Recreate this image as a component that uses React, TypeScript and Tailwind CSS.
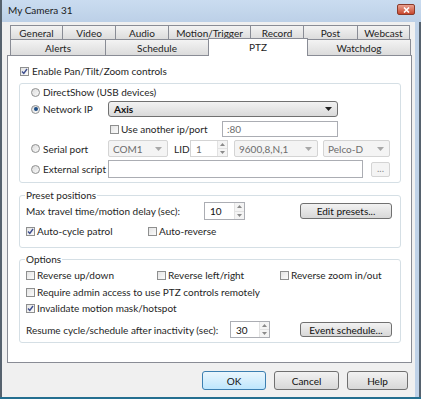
import React from "react";

function Check({ checked = false }: { checked?: boolean }) {
  return (
    <span className="flex h-[9px] w-[9px] shrink-0 items-center justify-center border border-[#8e8f8f] bg-gradient-to-br from-[#e4e4e4] to-[#fbfbfb]">
      {checked && (
        <svg width="7" height="7" viewBox="0 0 7 7">
          <path d="M1 3.6 L2.8 5.5 L6 1" fill="none" stroke="#3f4f8f" strokeWidth="1.4" />
        </svg>
      )}
    </span>
  );
}

function Radio({ checked = false }: { checked?: boolean }) {
  return (
    <span className="flex h-[9px] w-[9px] shrink-0 items-center justify-center rounded-full border border-[#8e8f8f] bg-gradient-to-br from-[#dcdcdc] to-[#fafafa]">
      {checked && <span className="h-[4px] w-[4px] rounded-full bg-[#1f4f86]" />}
    </span>
  );
}

function Arrow({ light = false }: { light?: boolean }) {
  return (
    <svg width="7" height="4" viewBox="0 0 7 4">
      <path d="M0 0 L7 0 L3.5 4 Z" fill={light ? "#a8a8a8" : "#222"} />
    </svg>
  );
}

function Combo({ w, text, disabled = false }: { w: string; text: string; disabled?: boolean }) {
  if (disabled) {
    return (
      <div className={`${w} flex h-[17px] shrink-0 items-center justify-between rounded-[2px] border border-[#d4d4d4] bg-[#f4f4f4] pl-[4px] pr-[5px] text-[#6d6d6d]`}>
        <span>{text}</span>
        <Arrow light />
      </div>
    );
  }
  return (
    <div className={`${w} flex h-[16px] shrink-0 items-center justify-between rounded-[3px] border border-[#707070] bg-gradient-to-b from-[#f2f2f2] to-[#dadada] pl-[5px] pr-[5px] text-[#111]`}>
      <span className="font-bold">{text}</span>
      <Arrow />
    </div>
  );
}

function Spin({ w, h, value, disabled = false }: { w: string; h: string; value: string; disabled?: boolean }) {
  return (
    <div className={`${w} ${h} flex shrink-0 border ${disabled ? "border-[#d4d4d4] text-[#6d6d6d]" : "border-[#abadb3] text-[#111]"} bg-white`}>
      <span className="flex flex-1 items-center pl-[5px]">{value}</span>
      <div className="flex w-[10px] flex-col border-l border-[#e2e2e2]">
        <span className="flex flex-1 items-center justify-center bg-[#f4f4f4]">
          <svg width="5" height="3" viewBox="0 0 5 3">
            <path d="M0 3 L5 3 L2.5 0 Z" fill="#8a8a8a" />
          </svg>
        </span>
        <span className="flex flex-1 items-center justify-center border-t border-[#e2e2e2] bg-[#f4f4f4]">
          <svg width="5" height="3" viewBox="0 0 5 3">
            <path d="M0 0 L5 0 L2.5 3 Z" fill="#8a8a8a" />
          </svg>
        </span>
      </div>
    </div>
  );
}

function Button({ w, h, label, primary = false }: { w: string; h: string; label: string; primary?: boolean }) {
  return (
    <div
      className={`${w} ${h} flex shrink-0 items-center justify-center rounded-[3px] border text-[#111] ${
        primary
          ? "border-[#3c7fb1] bg-gradient-to-b from-[#eaf6fd] to-[#bee6fd]"
          : "border-[#707070] bg-gradient-to-b from-[#f2f2f2] to-[#d8d8d8]"
      }`}
    >
      {label}
    </div>
  );
}

function Group({ title, h, children }: { title?: string; h: string; children: React.ReactNode }) {
  return (
    <div className={`relative ${h} mr-[10px] rounded-[3px] border border-[#d5dfe5]`}>
      {title && (
        <span className="absolute -top-[8px] left-[5px] bg-white px-[1px] leading-[14px]">{title}</span>
      )}
      {children}
    </div>
  );
}

const row1 = [
  { label: "General", w: "w-[53px]" },
  { label: "Video", w: "w-[54px]" },
  { label: "Audio", w: "w-[54px]" },
  { label: "Motion/Trigger", w: "w-[83px]" },
  { label: "Record", w: "w-[54px]" },
  { label: "Post", w: "w-[55px]" },
  { label: "Webcast", w: "w-[53px]" },
];

const row2 = [
  { label: "Alerts", w: "w-[96px]" },
  { label: "Schedule", w: "w-[104px]" },
  { label: "PTZ", w: "w-[100px]" },
  { label: "Watchdog", w: "w-[104px]" },
];

export default function App() {
  return (
    <div className="flex h-[399px] w-[421px] flex-col whitespace-nowrap bg-[#bfd2e8] font-['Lato',sans-serif] text-[10px] leading-[14px] text-[#1e1e1e]">
      {/* title bar */}
      <div className="flex h-[22px] shrink-0 items-start justify-between border-l-2 border-[#56626e] bg-gradient-to-b from-[#cadcf0] to-[#bcd0e7]">
        <span className="mt-[3px] pl-[6px] text-[#1a1a1a]">My Camera 31</span>
        <div className="mr-[6px] mt-[4px] flex h-[11px] w-[18px] items-center justify-center rounded-[2px] border border-[#8a3a2a] bg-gradient-to-b from-[#e8a090] to-[#c7452c]">
          <svg width="7" height="6" viewBox="0 0 7 6">
            <path d="M1 0.5 L6 5.5 M6 0.5 L1 5.5" stroke="white" strokeWidth="1.6" />
          </svg>
        </div>
      </div>

      {/* client area */}
      <div className="flex flex-1 border-b-2 border-[#246f90]">
        <div className="flex flex-1 flex-col border-l-2 border-[#56626e] bg-[#f0f0f0]">
          {/* tabs */}
          <div className="relative z-10 mt-[3px] flex flex-col pl-[8px]">
            <div className="flex h-[14px]">
              {row1.map((t, i) => (
                <div
                  key={t.label}
                  className={`${t.w} ${i > 0 ? "-ml-px" : ""} flex items-center justify-center border border-b-0 border-[#898c95] bg-gradient-to-b from-[#f3f3f3] to-[#dcdcdc] text-[#1e1e1e]`}
                >
                  {t.label}
                </div>
              ))}
            </div>
            <div className="flex h-[16px] items-end">
              {row2.map((t, i) =>
                t.label === "PTZ" ? (
                  <div
                    key={t.label}
                    className={`${t.w} -ml-px -mb-px flex h-[18px] items-start justify-center border border-b-0 border-[#898c95] bg-white pt-[1px]`}
                  >
                    {t.label}
                  </div>
                ) : (
                  <div
                    key={t.label}
                    className={`${t.w} ${i > 0 ? "-ml-px" : ""} flex h-[16px] items-center justify-center border border-b-0 border-[#898c95] bg-gradient-to-b from-[#f3f3f3] to-[#dcdcdc]`}
                  >
                    {t.label}
                  </div>
                )
              )}
            </div>
          </div>

          {/* panel */}
          <div className="ml-[5px] mr-[3px] flex h-[308px] flex-col border border-[#898c95] bg-white pl-[11px]">
            <div className="mt-[8px] flex h-[14px] items-center gap-[3px] pl-[1px]">
              <Check checked />
              <span>Enable Pan/Tilt/Zoom controls</span>
            </div>

            {/* source group */}
            <div className="mt-[5px]">
              <Group h="h-[100px]">
                <div className="flex flex-col pl-[11px]">
                  <div className="mt-[1px] flex h-[14px] items-center gap-[3px]">
                    <Radio />
                    <span>DirectShow (USB devices)</span>
                  </div>
                  <div className="mt-[2px] flex h-[16px] items-center">
                    <div className="flex w-[77px] items-center gap-[3px]">
                      <Radio checked />
                      <span>Network IP</span>
                    </div>
                    <Combo w="w-[230px]" text="Axis" />
                  </div>
                  <div className="mt-[4px] flex h-[16px] items-center">
                    <div className="ml-[79px] flex w-[112px] items-center gap-[2px]">
                      <Check />
                      <span>Use another ip/port</span>
                    </div>
                    <div className="flex h-[16px] w-[116px] items-center border border-[#abadb3] bg-white pl-[4px] text-[#6d6d6d]">
                      :80
                    </div>
                  </div>
                  <div className="mt-[3px] flex h-[17px] items-center">
                    <div className="flex w-[77px] items-center gap-[3px]">
                      <Radio />
                      <span>Serial port</span>
                    </div>
                    <Combo w="w-[60px]" text="COM1" disabled />
                    <span className="ml-[6px] w-[16px]">LID</span>
                    <Spin w="w-[38px]" h="h-[17px]" value="1" disabled />
                    <div className="ml-[6px]">
                      <Combo w="w-[84px]" text="9600,8,N,1" disabled />
                    </div>
                    <div className="ml-[5px]">
                      <Combo w="w-[67px]" text="Pelco-D" disabled />
                    </div>
                  </div>
                  <div className="mt-[3px] flex h-[18px] items-center">
                    <div className="flex w-[77px] items-center gap-[3px]">
                      <Radio />
                      <span>External script</span>
                    </div>
                    <div className="h-[18px] w-[255px] border border-[#abadb3] bg-white" />
                    <div className="ml-[8px] flex h-[15px] w-[19px] items-center justify-center rounded-[2px] border border-[#d4d4d4] bg-[#f4f4f4] pb-[3px] text-[#8a8a8a]">
                      ...
                    </div>
                  </div>
                </div>
              </Group>
            </div>

            {/* preset positions */}
            <div className="mt-[12px]">
              <Group title="Preset positions" h="h-[53px]">
                <div className="flex flex-col pl-[6px]">
                  <div className="mt-[6px] flex h-[18px] items-center">
                    <span className="w-[178px]">Max travel time/motion delay (sec):</span>
                    <Spin w="w-[41px]" h="h-[18px]" value="10" />
                    <div className="ml-[55px]">
                      <Button w="w-[92px]" h="h-[16px]" label="Edit presets..." />
                    </div>
                  </div>
                  <div className="mt-[4px] flex h-[14px] items-center">
                    <div className="flex w-[122px] items-center gap-[2px]">
                      <Check checked />
                      <span>Auto-cycle patrol</span>
                    </div>
                    <div className="flex items-center gap-[2px]">
                      <Check />
                      <span>Auto-reverse</span>
                    </div>
                  </div>
                </div>
              </Group>
            </div>

            {/* options */}
            <div className="mt-[11px]">
              <Group title="Options" h="h-[84px]">
                <div className="flex flex-col pl-[6px]">
                  <div className="mt-[8px] flex h-[14px] items-center">
                    <div className="flex w-[131px] items-center gap-[2px]">
                      <Check />
                      <span>Reverse up/down</span>
                    </div>
                    <div className="flex w-[123px] items-center gap-[2px]">
                      <Check />
                      <span>Reverse left/right</span>
                    </div>
                    <div className="flex items-center gap-[2px]">
                      <Check />
                      <span>Reverse zoom in/out</span>
                    </div>
                  </div>
                  <div className="mt-[3px] flex h-[14px] items-center gap-[2px]">
                    <Check />
                    <span>Require admin access to use PTZ controls remotely</span>
                  </div>
                  <div className="mt-[2px] flex h-[14px] items-center gap-[2px]">
                    <Check checked />
                    <span>Invalidate motion mask/hotspot</span>
                  </div>
                  <div className="mt-[6px] flex h-[17px] items-center">
                    <span className="w-[204px]">Resume cycle/schedule after inactivity (sec):</span>
                    <Spin w="w-[40px]" h="h-[17px]" value="30" />
                    <div className="ml-[30px]">
                      <Button w="w-[92px]" h="h-[15px]" label="Event schedule..." />
                    </div>
                  </div>
                </div>
              </Group>
            </div>
          </div>

          {/* dialog buttons */}
          <div className="mt-[8px] flex justify-end gap-[8px] pr-[7px]">
            <Button w="w-[64px]" h="h-[19px]" label="OK" primary />
            <Button w="w-[65px]" h="h-[19px]" label="Cancel" />
            <Button w="w-[61px]" h="h-[19px]" label="Help" />
          </div>
        </div>
        <div className="w-[6px] border-r-2 border-[#56626e] bg-[#bfd2e8]" />
      </div>
    </div>
  );
}
